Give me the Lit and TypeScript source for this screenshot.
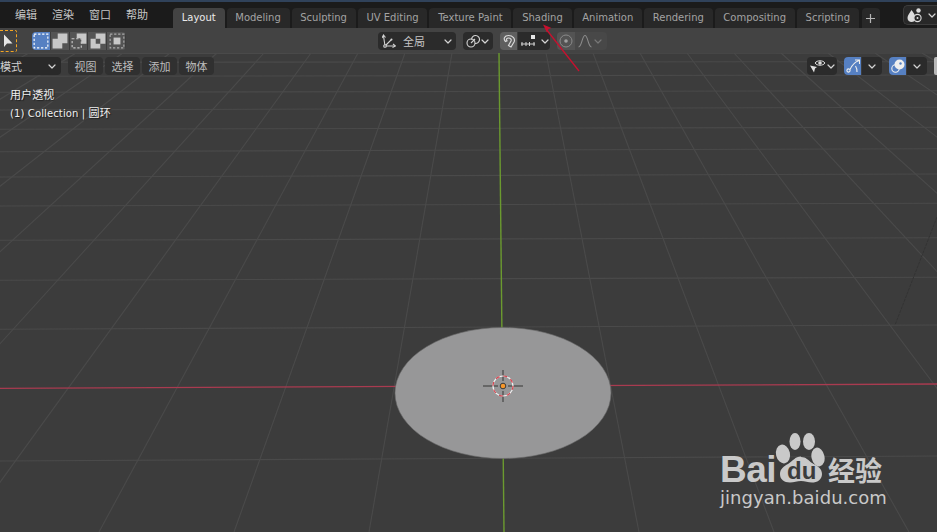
import { LitElement, html, css, svg } from "lit";
import { customElement } from "lit/decorators.js";

const MENUS = ["编辑", "渲染", "窗口", "帮助"];
const TABS = [
  "Layout",
  "Modeling",
  "Sculpting",
  "UV Editing",
  "Texture Paint",
  "Shading",
  "Animation",
  "Rendering",
  "Compositing",
  "Scripting",
];
const VIEW_MENUS = ["视图", "选择", "添加", "物体"];

// y at the left edge, y at the right edge
const FLOOR_ROWS = [
  [53.5, 53],
  [62.3, 61.7],
  [76.3, 75],
  [92.3, 90.7],
  [110, 107.3],
  [129.3, 127.3],
  [151.7, 148.7],
  [177, 174],
  [206, 203.3],
  [240.3, 237.7],
  [280.3, 277.3],
  [329.3, 325],
  [461, 456],
];

// columns converge: spacing is 47px at y=53 and 135px at y=532
const FLOOR_COLS = Array.from({ length: 37 }, (_, i) => i - 18).filter((k) => k !== 0);

const chevron = (dim = false) => html`<svg class="chev ${dim ? "dim" : ""}" viewBox="0 0 8 5">
  <path d="M1 1l3 3 3-3" />
</svg>`;

const modeIcon = (i: number) => {
  const solid = "#c8c8c8";
  if (i === 0) {
    return html`<svg class="ico" viewBox="0 0 14 14">
      <rect x="1" y="1" width="12" height="12" fill="none" stroke="#fff" stroke-dasharray="2 1.5" />
    </svg>`;
  }
  if (i === 1) {
    return html`<svg class="ico" viewBox="0 0 14 14">
      <path d="M5 0.5h8.5v8.5h-4.5v4.5h-8.5v-8.5h4.5z" fill=${solid} />
    </svg>`;
  }
  if (i === 2) {
    return html`<svg class="ico" viewBox="0 0 14 14">
      <path d="M5 0.500h8.500v9h-4.500v-5h-4z" fill=${solid} />
      <rect x="1" y="5" width="8" height="8" fill="none" stroke="#c8c8c8" stroke-dasharray="2 1.500" />
    </svg>`;
  }
  if (i === 3) {
    return html`<svg class="ico" viewBox="0 0 14 14">
      <path
        fill-rule="evenodd"
        d="M5 0.500h8.500v9h-4.500v4h-8.500v-8.500h4.500zM5 5v4.500h4v-4.500z"
        fill=${solid}
      />
    </svg>`;
  }
  return html`<svg class="ico" viewBox="0 0 14 14">
    <rect x="1" y="1" width="12" height="12" fill="none" stroke="#aaa" stroke-dasharray="2 1.500" />
    <rect x="4" y="4" width="6" height="6" fill=${solid} />
  </svg>`;
};

@customElement("baidu-mark")
export class BaiduMark extends LitElement {
  static styles = css`
    :host {
      display: flex;
      flex-direction: column;
      color: #c9c9c9;
    }
    .brand {
      display: flex;
      align-items: flex-end;
      height: 52px;
    }
    .bai {
      font: 700 37px/26px "Liberation Sans", sans-serif;
      letter-spacing: -0.5px;
      width: 54px;
    }
    .paw {
      width: 52px;
      height: 52px;
      flex: none;
    }
    .cn {
      font: 700 27px/26px "Noto Sans CJK SC", sans-serif;
      margin-left: 2px;
      white-space: nowrap;
    }
    .url {
      font: 400 18px/24px "DejaVu Sans", sans-serif;
      letter-spacing: 0.05px;
      margin-top: 3px;
      white-space: nowrap;
    }
    text {
      font: 700 24px "Liberation Sans", sans-serif;
      fill: #3c3c3c;
    }
  `;

  render() {
    return html`
      <div class="brand">
        <span class="bai">Bai</span>
        <svg class="paw" viewBox="0 0 52 52">
          <g fill="#c9c9c9">
            <ellipse cx="21" cy="10.500" rx="5.500" ry="8.500" />
            <ellipse cx="35" cy="10.500" rx="6" ry="8.500" />
            <ellipse cx="9" cy="23" rx="7" ry="9.500" transform="rotate(-12 9 23)" />
            <ellipse cx="44" cy="26" rx="6.500" ry="9.500" transform="rotate(-12 44 26)" />
            <path
              d="M27 26c5 0 7 3 11 6 6 3 10 6 10 11 0 6-5 8.500-10 8.500-4 0-7-1.500-11-1.500s-7 1.500-11 1.500c-6 0-10-3-10-8.500 0-5 4-8 8-10 5-3 7-7.500 13-7.500z"
            />
          </g>
          <text x="13" y="48">du</text>
        </svg>
        <span class="cn">经验</span>
      </div>
      <span class="url">jingyan.baidu.com</span>
    `;
  }
}

@customElement("app-root")
export class AppRoot extends LitElement {
  static styles = css`
    :host {
      display: block;
      width: 937px;
      height: 532px;
      position: relative;
      overflow: hidden;
      background: #3c3c3c;
      font: 400 10px/14px "DejaVu Sans", "Noto Sans CJK SC", sans-serif;
      color: #c4c4c4;
    }
    .scene,
    .annot {
      position: absolute;
      inset: 0;
      width: 937px;
      height: 532px;
    }
    .scene {
      z-index: 0;
    }
    .annot {
      z-index: 3;
      pointer-events: none;
    }
    .ui {
      position: relative;
      z-index: 1;
    }
    .cjk {
      font-size: 11px;
    }

    /* top bar */
    .topbar {
      display: flex;
      align-items: flex-end;
      height: 28px;
      box-sizing: border-box;
      background: #1b1b1b;
      border-top: 2px solid #30425a;
    }
    .menus {
      display: flex;
      gap: 15px;
      width: 173px;
      box-sizing: border-box;
      padding: 0 0 5px 15px;
      color: #c6c6c6;
      font-size: 11px;
      flex: none;
    }
    .tabs {
      display: flex;
      gap: 2px;
      flex: none;
    }
    .tab {
      height: 20px;
      padding: 0 8.75px;
      line-height: 20px;
      white-space: nowrap;
      background: #282828;
      border-radius: 4px 4px 0 0;
      color: #a3a3a3;
    }
    .tab.active {
      background: #434343;
      color: #eaeaea;
    }
    .tab.add {
      width: 18px;
      padding: 0;
      margin-left: 1px;
      display: flex;
      align-items: center;
      justify-content: center;
    }
    .scene-picker {
      display: flex;
      align-items: center;
      gap: 2px;
      margin: 0 0 3px auto;
      width: 34px;
      height: 20px;
      box-sizing: border-box;
      padding-left: 2px;
      background: #282828;
      border: 1px solid #3c3c3c;
      border-right: 0;
      border-radius: 5px 0 0 5px;
    }

    /* tool settings */
    .tools {
      display: flex;
      align-items: flex-start;
      height: 25px;
      padding-top: 4px;
      box-sizing: border-box;
      background: #434343;
      font-size: 11px;
    }
    .tool-active {
      width: 17px;
      height: 22px;
      margin: -2px 15px 0 0;
      box-sizing: border-box;
      border: 1px dashed #f5a623;
      border-left: 0;
      border-radius: 0 2px 2px 0;
      display: flex;
      align-items: center;
      justify-content: center;
      flex: none;
    }
    .group {
      display: flex;
      height: 18px;
      border-radius: 4px;
      overflow: hidden;
      flex: none;
    }
    .cell {
      width: 18px;
      height: 18px;
      display: flex;
      align-items: center;
      justify-content: center;
      background: #545454;
      box-shadow: inset -1px 0 0 #3c3c3c;
      flex: none;
    }
    .modes .cell {
      width: 18.8px;
    }
    .modes .ico {
      width: 16px;
      height: 16px;
    }
    .cell.on {
      background: #5680c2;
    }
    .cell.on-grey {
      background: #5f5f5f;
    }
    .cell.off {
      background: #535353;
      box-shadow: none;
    }
    .ico {
      width: 14px;
      height: 14px;
      display: block;
    }
    .chev {
      width: 8px;
      height: 5px;
      flex: none;
    }
    .chev path {
      fill: none;
      stroke: #d4d4d4;
      stroke-width: 1.2;
      stroke-linecap: round;
      stroke-linejoin: round;
    }
    .chev.dim path {
      stroke: #777;
    }
    .drop {
      display: flex;
      align-items: center;
      background: #2b2b2b;
      height: 18px;
      border-radius: 4px;
      flex: none;
      box-sizing: border-box;
    }
    .drop span {
      padding-top: 3px;
    }
    .orient {
      width: 78px;
      padding: 0 3px 0 4px;
      margin-left: 252px;
      gap: 7px;
    }
    .orient .chev {
      margin-left: auto;
      margin-right: 1px;
    }
    .pivot {
      width: 30px;
      margin-left: 7px;
      padding-left: 3px;
      gap: 1px;
    }
    .magnet {
      width: 50px;
      margin-left: 7px;
    }
    .magnet .snap {
      display: flex;
      align-items: center;
      gap: 3px;
      padding-left: 2px;
      background: #2b2b2b;
      flex: 1;
    }
    .falloff {
      width: 50px;
      margin-left: 7px;
    }
    .falloff .rest {
      display: flex;
      align-items: center;
      gap: 2px;
      padding-left: 3px;
      background: #484848;
      flex: 1;
    }

    /* viewport header */
    .vhead {
      display: flex;
      align-items: flex-start;
      height: 23px;
      padding-top: 4px;
      box-sizing: border-box;
      font-size: 11px;
    }
    .mode {
      width: 61px;
      padding: 0 3px 0 0;
      justify-content: space-between;
      background: #292929;
      border-radius: 0 4px 4px 0;
      color: #d0d0d0;
      margin-right: 7px;
    }
    .mode .chev {
      margin-right: 2px;
    }
    .vmenus {
      display: flex;
      gap: 2px;
    }
    .vmenu {
      width: 35px;
      height: 18px;
      line-height: 21px;
      text-align: center;
      background: #303030;
      border-radius: 4px;
      color: #bdbdbd;
    }
    .vright {
      display: flex;
      gap: 7px;
      margin-left: auto;
    }
    .vright .group {
      background: #2b2b2b;
      align-items: center;
    }
    .eye {
      width: 30px;
      padding-left: 2px;
      box-sizing: border-box;
    }
    .vright .tail {
      width: 20px;
      display: flex;
      justify-content: center;
    }
    .sliver {
      width: 3px;
      height: 18px;
      background: #b9b9b9;
      border-radius: 2px 0 0 2px;
    }

    /* viewport text overlay */
    .info {
      margin: 11px 0 0 10px;
      color: #efefef;
      line-height: 18px;
      letter-spacing: 0.12px;
      text-shadow: 1px 1px 1px rgba(0, 0, 0, 0.55);
    }

    baidu-mark {
      position: absolute;
      z-index: 2;
      left: 720px;
      top: 431px;
    }
  `;

  private renderScene() {
    return html`<svg class="scene" viewBox="0 0 937 532">
      <g stroke="#4a4a4a" stroke-width="1.100" fill="none">
        ${FLOOR_ROWS.map(([a, b]) => svg`<line x1="0" y1=${a} x2="937" y2=${b} />`)}
        ${FLOOR_COLS.map(
          (k) => svg`<line x1=${499 + 47 * k} y1="53" x2=${504 + 135 * k} y2="532" />`
        )}
      </g>
      <line x1="0" y1="388.300" x2="937" y2="384" stroke="#a93b50" stroke-width="1.300" />
      <line x1="499" y1="53" x2="504" y2="532" stroke="#6b9a2f" stroke-width="1.400" />
      <path d="M937 217L895 325" stroke="#333" stroke-dasharray="3 1" fill="none" />
      <ellipse
        cx="503"
        cy="393"
        rx="108"
        ry="65.500"
        fill="#979798"
        stroke="#6a6a6a"
        stroke-width="0.600"
      />
      <g stroke="#666" stroke-width="2">
        <path d="M483 386h15M508 386h15M503 370v11M503 391v11" />
      </g>
      <circle cx="503" cy="386" r="10" fill="none" stroke="#f2f2f2" stroke-width="1.200" />
      <circle
        cx="503"
        cy="386"
        r="10"
        fill="none"
        stroke="#d8404c"
        stroke-width="1.200"
        stroke-dasharray="3.930 3.930"
      />
      <circle cx="503" cy="386" r="2.800" fill="#f7972a" stroke="#3c3c3c" stroke-width="1" />
    </svg>`;
  }

  private renderTopbar() {
    return html`<div class="topbar">
      <div class="menus">${MENUS.map((m) => html`<span>${m}</span>`)}</div>
      <div class="tabs">
        ${TABS.map((t, i) => html`<div class="tab ${i === 0 ? "active" : ""}">${t}</div>`)}
        <div class="tab add">
          <svg width="11" height="11" viewBox="0 0 11 11">
            <path d="M5.500 1v9M1 5.500h9" stroke="#b5b5b5" stroke-width="1.200" />
          </svg>
        </div>
      </div>
      <div class="scene-picker">
        <svg width="20" height="16" viewBox="0 0 20 16">
          <path d="M5.500 3c2 3 4 5 4 8s-2 4-4 4-4-1.500-4-4 2-5 4-8z" fill="#dcdcdc" />
          <circle cx="12.500" cy="3.500" r="2.200" fill="#dcdcdc" />
          <circle cx="11.500" cy="11" r="3.600" fill="#282828" stroke="#dcdcdc" stroke-width="1.100" />
          <circle cx="11.500" cy="11" r="1" fill="#dcdcdc" />
        </svg>
        ${chevron()}
      </div>
    </div>`;
  }

  private renderTools() {
    return html`<div class="tools">
      <div class="tool-active">
        <svg width="10" height="14" viewBox="0 0 10 14">
          <path d="M1 0.500v12.500l3-3.500h5.500z" fill="#e6e6e6" />
        </svg>
      </div>
      <div class="group modes">
        ${[0, 1, 2, 3, 4].map(
          (i) => html`<div class="cell ${i === 0 ? "on" : ""}">${modeIcon(i)}</div>`
        )}
      </div>
      <div class="drop orient">
        <svg class="ico" viewBox="0 0 14 14" fill="none" stroke="#d4d4d4" stroke-width="1.100">
          <path d="M3 12L1.500 2M3 12h10M3 12l6.500-6.500" />
          <path d="M0 4l1.500-3 2 2.500M11 10l2.500 2-3 1.500" />
          <circle cx="3" cy="12" r="1.300" fill="#2b2b2b" />
          <circle cx="9.500" cy="5.500" r="1" fill="#d4d4d4" stroke="none" />
        </svg>
        <span>全局</span>
        ${chevron()}
      </div>
      <div class="drop pivot">
        <svg class="ico" viewBox="0 0 14 14" fill="none" stroke="#d4d4d4" stroke-width="1.100">
          <circle cx="5" cy="9" r="4" />
          <path d="M5.500 5.500A4 4 0 1 1 9 9.500" />
          <path d="M5 9l4-4" />
        </svg>
        ${chevron()}
      </div>
      <div class="group magnet">
        <div class="cell on-grey">
          <svg class="ico" viewBox="0 0 14 14" fill="none" stroke="#d8d8d8" stroke-width="1.200">
            <path d="M3.500 7.500C1 5 2.500 1.500 6.500 1.500c4.500 0 7 3.500 5.500 6.500l-3 5-2.500-1.500 2.500-4.500c.7-1.500-.5-3-2.500-3-1.800 0-2.700 1.500-1.500 2.800L3.500 7.500z" />
          </svg>
        </div>
        <div class="snap">
          <svg width="18" height="14" viewBox="0 0 18 14">
            <rect x="11" y="1" width="4" height="4" fill="#e6e6e6" />
            <path d="M1 10h14M2 8v4M6 8v4M9.500 8v4M14 8v4" stroke="#d4d4d4" fill="none" />
          </svg>
          ${chevron()}
        </div>
      </div>
      <div class="group falloff">
        <div class="cell off">
          <svg class="ico" viewBox="0 0 14 14" fill="none" stroke="#8a8a8a">
            <circle cx="7" cy="7" r="6" />
            <circle cx="7" cy="7" r="1.800" fill="#a0a0a0" stroke="none" />
          </svg>
        </div>
        <div class="rest">
          <svg class="ico" viewBox="0 0 14 14" fill="none" stroke="#8a8a8a" stroke-width="1.100">
            <path d="M0.500 13C4 13 4 1.500 7 1.500S10 13 13.500 13" />
          </svg>
          ${chevron(true)}
        </div>
      </div>
    </div>`;
  }

  private renderViewHeader() {
    return html`<div class="vhead">
      <div class="drop mode"><span>模式</span>${chevron()}</div>
      <div class="vmenus">${VIEW_MENUS.map((m) => html`<div class="vmenu">${m}</div>`)}</div>
      <div class="vright">
        <div class="group eye">
          <svg width="18" height="16" viewBox="0 0 18 16">
            <path
              d="M6 5c2-3 8-3 10 0-2 3-8 3-10 0z"
              fill="none"
              stroke="#dcdcdc"
              stroke-width="1"
            />
            <circle cx="11" cy="5" r="1.800" fill="#dcdcdc" />
            <path d="M1 7.500l7 1.500-2 1.500-1 4z" fill="#e0e0e0" />
          </svg>
          ${chevron()}
        </div>
        <div class="group">
          <div class="cell on">
            <svg class="ico" viewBox="0 0 14 14" fill="none" stroke="#eee" stroke-width="1.100">
              <circle cx="2.500" cy="11.500" r="1.600" />
              <path d="M4 10.500C6 6 9 3 13 1.500M9 1h4.500v4M11 13c0-2.500-.5-4.500-1.500-6" />
            </svg>
          </div>
          <div class="tail">${chevron()}</div>
        </div>
        <div class="group">
          <div class="cell on">
            <svg class="ico" viewBox="0 0 14 14">
              <circle cx="4.500" cy="9.500" r="3.700" fill="none" stroke="#eee" stroke-width="1.100" />
              <circle cx="8.500" cy="5.500" r="5" fill="#eee" />
              <circle cx="9.500" cy="4.500" r="1.200" fill="#5680c2" />
            </svg>
          </div>
          <div class="tail">${chevron()}</div>
        </div>
        <div class="sliver"></div>
      </div>
    </div>`;
  }

  render() {
    return html`
      ${this.renderScene()}
      <div class="ui">
        ${this.renderTopbar()} ${this.renderTools()} ${this.renderViewHeader()}
        <div class="info">
          <div class="cjk">用户透视</div>
          <div>(1) Collection | <span class="cjk">圆环</span></div>
        </div>
      </div>
      <baidu-mark></baidu-mark>
      <svg class="annot" viewBox="0 0 937 532">
        <path d="M579 71L546 29" stroke="#c8102e" stroke-width="1.300" fill="none" />
        <path d="M543 24.500l8.500 3.500-3 1-1.500 3.500z" fill="#c8102e" />
      </svg>
    `;
  }
}
